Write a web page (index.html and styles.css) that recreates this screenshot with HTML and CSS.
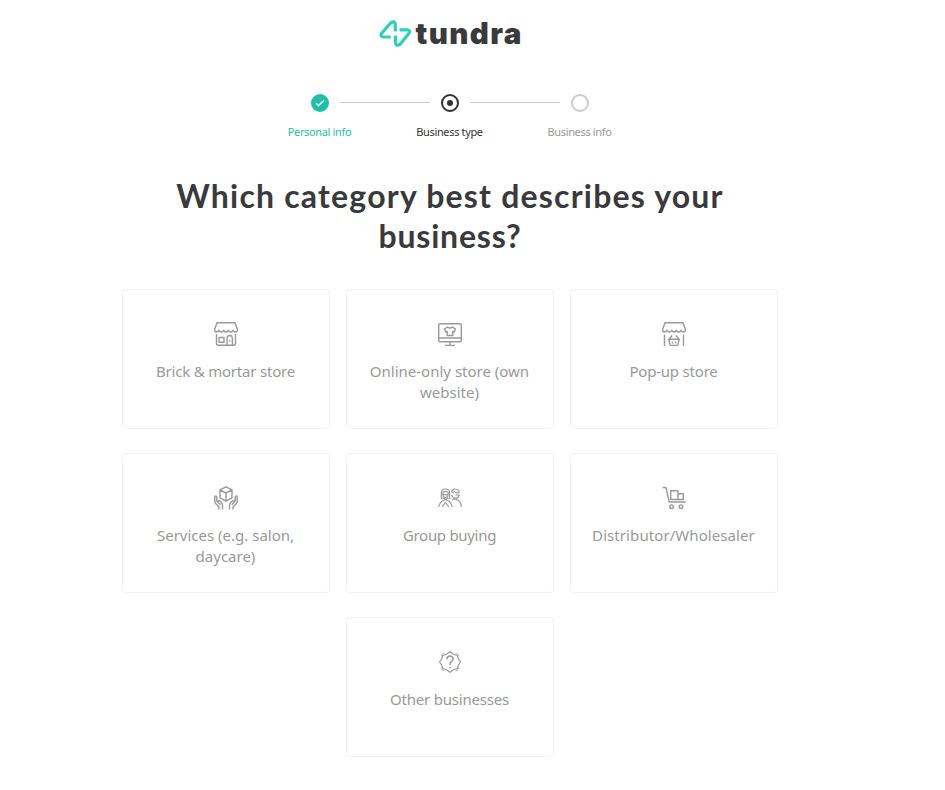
FILE: index.html
```
<!DOCTYPE html>
<html lang="en">
<head>
<meta charset="utf-8">
<title>Tundra</title>
<link rel="stylesheet" href="styles.css">
</head>
<body>
<main class="page">
  <header class="logo">
    <svg class="logo-mark" width="34" height="28" viewBox="0 0 34 28"><path d="M11.800 17H4q-3-.5-1.500-3.500L11.800 2.800Q15.800.3 16.300 4v7.500M20.500 9.800H28.500q3 .5 1.500 3.500L21.200 24.200q-3.800 2.500-4.700-1.200V15.500"/></svg>
    <span class="logo-text">tundra</span>
  </header>

  <nav class="steps">
    <div class="step done">
      <svg class="dot" viewBox="0 0 18 18"><circle class="disc" cx="9" cy="9" r="9"/><path class="tick" d="M5 9.300l2.500 2.300L13 6.500"/></svg>
      <span>Personal info</span>
    </div>
    <i class="rule"></i>
    <div class="step current">
      <svg class="dot" viewBox="0 0 18 18"><circle class="ring" cx="9" cy="9" r="8"/><circle class="core" cx="9" cy="9" r="3"/></svg>
      <span>Business type</span>
    </div>
    <i class="rule"></i>
    <div class="step">
      <svg class="dot" viewBox="0 0 18 18"><circle class="ring" cx="9" cy="9" r="8"/></svg>
      <span>Business info</span>
    </div>
  </nav>

  <h1>Which category best describes your <span class="last">business?</span></h1>

  <section class="cards">
    <div class="card">
      <svg class="icon" viewBox="0 0 24 24"><path d="M3 .8h18L23.300 7v1.500q-.3 1.500-1.800 1.500-1.700 0-2.400-1.800Q18.300 10 16.700 10T14.300 8.200Q13.600 10 12 10T9.700 8.200Q8.900 10 7.300 10T4.900 8.200Q4.200 10 2.500 10 1 10 .7 8.500V7zM2.500 12v9.700q0 1.500 1.500 1.500h16q1.500 0 1.500-1.500V12M5 15.500h5v4.800H5zM13 23.200v-6q0-3.700 2.700-3.700t2.700 3.700v6M15.700 18v1.500"/></svg>
      <span>Brick &amp; mortar store</span>
    </div>
    <div class="card">
      <svg class="icon" viewBox="0 0 24 24"><path d="M2 1.700h20q1.300 0 1.300 1.300v15.500q0 1.300-1.300 1.300H2Q.7 19.800.7 18.500V3Q.7 1.700 2 1.700zM.7 16h22.600M12 20v3.300M7 23.400h10M9.500 5q2.500 2 5 0l3 2-1.200 3-1.500-.5v4H9.200v-4l-1.500.5-1.200-3z"/></svg>
      <span class="wide">Online-only store (own website)</span>
    </div>
    <div class="card">
      <svg class="icon" viewBox="0 0 24 24"><path d="M3 .8h18L23.300 7v1.500q-.3 1.500-1.800 1.500-1.700 0-2.400-1.800Q18.300 10 16.700 10T14.300 8.200Q13.600 10 12 10T9.700 8.200Q8.900 10 7.300 10T4.900 8.200Q4.200 10 2.500 10 1 10 .7 8.500V7zM2.500 12.500V24M21.500 12.500V24M5.800 17.200h12.400M7 17.500l1 5q.3 1 1.300 1h5.400q1 0 1.300-1l1-5M7.500 17l2.500-3.500M16.500 17L14 13.500M10.500 19.500v2M13.500 19.500v2"/></svg>
      <span>Pop-up store</span>
    </div>
    <div class="card">
      <svg class="icon" viewBox="0 0 24 24"><path d="M12 .8l6 3v8l-6 3.400-6-3.400v-8zM6 4l6 3 6-3M12 7v8M5 23.500V21L1.700 17.500Q.8 16.500.8 15v-4q0-1 .9-1t1.100 1v4L6.300 18.700M8.500 23.500v-4.200q0-1.500-1-2.500l-2-2q-.8-.5-1.500.200t0 1.500M19 23.500V21l3.300-3.500q.9-1 .9-2.500v-4q0-1-.9-1t-1.100 1v4l-3.500 3.700M15.500 23.500v-4.200q0-1.500 1-2.500l2-2q.8-.5 1.500.200t0 1.500"/></svg>
      <span class="wide">Services (e.g. salon, daycare)</span>
    </div>
    <div class="card">
      <svg class="icon fine" viewBox="0 0 24 24"><path d="M3.300 13V7q.2-4 4.200-4t4.200 4v6M4.500 6.500l3-1.200 3 1.200M4.800 6.500v2q.2 3 2.700 3t2.700-3v-2M4.500 8.700h6M3.500 12l2.700.5 1.300 1 1.300-1 2.700-.5M.7 21q.5-3.500 3.300-6l3.500-1.500L11 15q2.800 2.500 3.300 6M4 21l3.500-4.500L11 21M13.500 6q.5-3 3.500-3t4.200 2.200l-.5 1.500q-3 .5-4.500-1l-2.500 1.300M13.500 9q1.500 3.300 4 3.300T21.300 9h-4M14 14l3-1.200 3.500 1.700q2.800 1.800 2.800 6.500"/></svg>
      <span class="tight">Group buying</span>
    </div>
    <div class="card">
      <svg class="icon" viewBox="0 0 24 24"><path d="M.7 1.500h2.500q.8 0 1 .8l3 13.700h16.500M8.700 4.700h7.300v8.800H8.700zM16 7.700h5.300v5.800H16"/><circle cx="9.500" cy="20.700" r="1.800"/><circle cx="19" cy="20.700" r="1.800"/></svg>
      <span class="widest">Distributor/Wholesaler</span>
    </div>
    <div class="card">
      <svg class="icon fine" viewBox="0 0 24 24"><path d="M12 1.700L15.500 4.300 19.300 5.500 20.300 8.800 22.500 12 20.300 15.200 19.300 18.500 15.500 19.700 12 22.300 8.500 19.700 4.700 18.500 3.700 15.200 1.500 12 3.700 8.800 4.700 5.500 8.500 4.300z"/><path class="spark" d="M3.300 6.500l.7-2.300 2.500-1M17.500 3.200l2.500 1 .7 2.300M20.700 17.500l-.7 2.300-2.500 1M6.500 20.800l-2.500-1-.7-2.300"/><path class="query" d="M8.900 9.300q0-3.300 3.100-3.300t3.100 2.900q0 1.600-1.600 2.600T12 14.500v.8M12 17v1.500"/></svg>
      <span>Other businesses</span>
    </div>
  </section>
</main>
</body>
</html>
```
FILE: styles.css
```
body {
  margin: 0;
  background: #fff;
  font-family: "Noto Sans", sans-serif;
}
.page {
  width: 900px;
  padding-top: 20px;
  display: flex;
  flex-direction: column;
  align-items: center;
}
.logo {
  display: flex;
  height: 28px;
  width: 143px;
  gap: 3px;
}
.logo-mark {
  flex: none;
  fill: none;
  stroke: #2fd0b9;
  stroke-width: 3.2;
  stroke-linejoin: round;
}
.logo-text {
  font: 900 29.500px/27px Inter, sans-serif;
  letter-spacing: 1.4px;
  color: #3a3a3c;
}
.steps {
  display: flex;
  margin-top: 46px;
}
.step {
  width: 40px;
  display: flex;
  flex-direction: column;
  align-items: center;
  gap: 12px;
  color: #999;
  font-size: 11px;
  line-height: 16px;
  letter-spacing: -0.35px;
  white-space: nowrap;
}
.step span { margin-right: 1px; }
.dot {
  flex: none;
  width: 18px;
  height: 18px;
  fill: none;
}
.rule {
  width: 90px;
  height: 1px;
  margin-top: 8px;
  background: #ccc;
}
.disc { fill: #1fbfa8; }
.tick { stroke: #fff; stroke-width: 1.5; }
.ring { stroke: #ccc; stroke-width: 2; }
.core { fill: #333; }
.done { color: #1fbfa8; }
.current { color: #333; }
.current .ring { stroke: #333; }
h1 {
  width: 600px;
  margin: 36px 0 33px;
  font: 700 32px/40px Lato, sans-serif;
  letter-spacing: 1.2px;
  color: #3a3a3c;
  text-align: center;
}
.last { letter-spacing: 0.8px; }
.cards {
  width: 656px;
  display: flex;
  flex-wrap: wrap;
  justify-content: center;
  gap: 24px 16px;
}
.card {
  box-sizing: border-box;
  width: 208px;
  height: 140px;
  padding: 32px 20px 0;
  border: 1px solid #f2f2f2;
  border-radius: 4px;
  display: flex;
  flex-direction: column;
  align-items: center;
  gap: 15px;
  color: #999;
  font-size: 15px;
  line-height: 21px;
  letter-spacing: -0.2px;
  text-align: center;
}
.card span { margin-right: 1px; }
.wide { letter-spacing: 0; }
.widest { letter-spacing: 0.08px; }
.tight { letter-spacing: -0.3px; }
.icon {
  flex: none;
  width: 24px;
  height: 24px;
  fill: none;
  stroke: #999;
  stroke-width: 1.4;
  stroke-linejoin: round;
}
.fine { stroke-width: 1.2; }
.spark { stroke-width: 0.7; }
.query { stroke-width: 1.5; }
```
